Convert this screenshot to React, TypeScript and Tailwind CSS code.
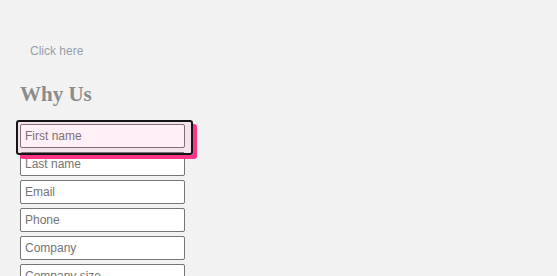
const fields = ["First name", "Last name", "Email", "Phone", "Company", "Company size"];

export default function App() {
  return (
    <div
      className="min-h-screen bg-[#f2f2f2] pl-[20px] pt-[44px]"
      style={{ fontFamily: '"Liberation Sans", Arial, sans-serif' }}
    >
      <a className="ml-[10px] block text-[12px] leading-[14px] text-[#98a0ab] cursor-pointer">Click here</a>

      <h2
        className="mt-[24px] text-[21px] font-bold leading-[24px] text-[#8c8c8c]"
        style={{ fontFamily: '"Liberation Serif", "Times New Roman", serif' }}
      >
        Why Us
      </h2>

      <form className="mt-[18px] flex flex-col gap-[4px]">
        {fields.map((f, i) => (
          <div key={f} className="relative w-[165px]">
            <input
              placeholder={f}
              className="block h-[24px] w-[165px] rounded-[2px] border border-[#767676] bg-white px-[4px] text-[12px] text-[#333] placeholder:text-[#757575] outline-none"
            />
            {i === 0 && (
              <div className="pointer-events-none absolute left-[-4px] top-[-4px] z-10 h-[35px] w-[177px] rounded-[3px] border-2 border-[#151515] bg-[rgba(255,51,136,0.08)] shadow-[4px_4px_0_#ff3388]" />
            )}
          </div>
        ))}
      </form>
    </div>
  );
}
